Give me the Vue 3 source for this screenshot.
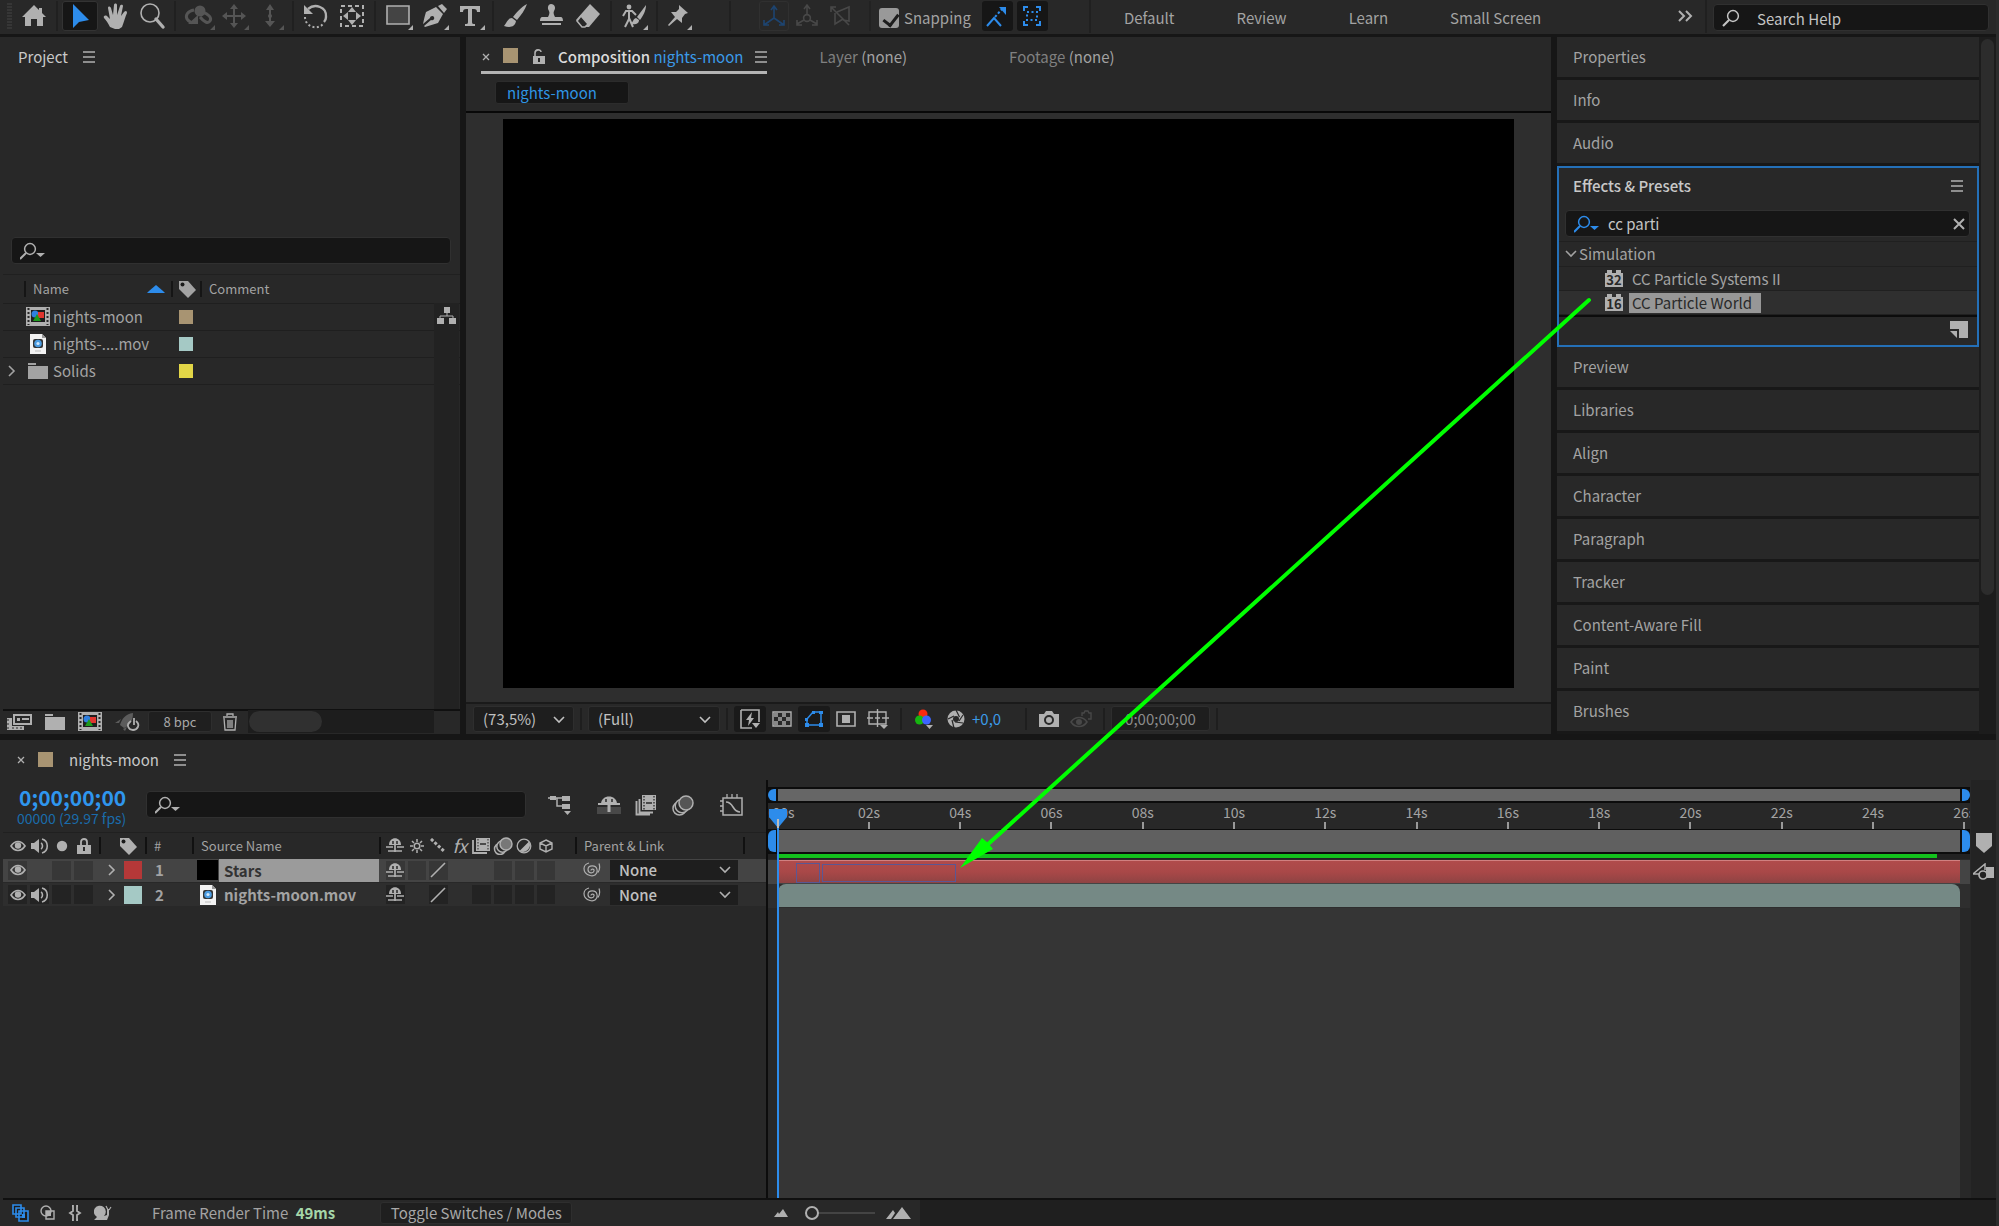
<script setup>
import { h, ref } from 'vue'

const art = {
  grip: [8, 30, '<path d="M1 3h5M1 6h5M1 9h5M1 12h5M1 15h5M1 18h5M1 21h5M1 24h5M1 27h5" stroke="#444" fill="none"/>'],
  home: [36, 30, '<path d="M18 4L6 16h3v9h6v-7h6v7h6v-9h3L26 12V7h-3v2z" fill="currentColor"/>'],
  arrow: [36, 30, '<path d="M11 3v24l6-6 10-2z" fill="currentColor"/>'],
  hand: [36, 30, '<path d="M12 26c-2-4-4-7-6-9-1-2 1-3 3-2l3 3-2-11c0-2 2-2 3 0l2 7 1-10c0-2 3-2 3 0v10l3-9c1-2 3-1 3 0l-2 10 3-4c2-2 3-1 3 1-2 4-3 9-5 14l-3 2h-4z" fill="currentColor"/>'],
  zoom: [36, 30, '<circle cx="16" cy="12" r="9" fill="none" stroke="currentColor" stroke-width="1.6"/><path d="M22 18l7 8" stroke="currentColor" stroke-width="3.4" stroke-linecap="round"/>'],
  orbit: [36, 30, '<g fill="none" stroke="currentColor" stroke-width="3"><path d="M14 9c-6 1-9 5-7 9 1 2 3 3 5 4M22 11c7 2 10 6 8 9-2 3-6 1-10-4"/></g><circle cx="20" cy="10" r="5.500" fill="currentColor"/><path d="M8 23h10v-9zM35 29v-5l-5 5z" fill="currentColor"/>'],
  pan: [36, 30, '<path d="M18 3l4 5h-3v6h6v-3l5 4-5 4v-3h-6v6h3l-4 5-4-5h3v-6h-6v3l-5-4 5-4v3h6V8h-3zM33 29v-5l-5 5z" fill="currentColor"/>'],
  dolly: [36, 30, '<path d="M18 3l4 6h-3v11h4l-5 6-5-6h4V9h-3z" fill="currentColor"/><circle cx="18" cy="15" r="2" fill="currentColor"/><path d="M32 29v-5l-5 5z" fill="currentColor"/>'],
  rotate: [36, 30, '<path d="M10 8c7-6 19-2 18 8 0 2-1 4-2 5" fill="none" stroke="currentColor" stroke-width="2.4"/><path d="M6 4v9h9z" fill="currentColor"/><path d="M7 16c0 10 13 14 19 6" fill="none" stroke="currentColor" stroke-width="2" stroke-dasharray="2 2.4"/>'],
  anchor: [36, 30, '<path d="M7 5h22v20H7z" fill="none" stroke="currentColor" stroke-width="2" stroke-dasharray="4 3"/><path d="M18 6l4 5h-8zM18 24l4-5h-8zM9 15l5-4v8zM27 15l-5-4v8z" fill="currentColor"/>'],
  rect: [36, 30, '<path d="M7 5h22v18H7z" fill="#444" stroke="currentColor" stroke-width="1.6"/><path d="M33 29v-5l-5 5z" fill="currentColor"/>'],
  pen: [36, 30, '<path d="M22 5l4-2 5 5-3 4zM20 6l7 7-5 9-13 4-1-1 7-6c2 1 4-1 3-3s-4-1-4 1l-7 6c1-5 2-9 3-12zM33 29v-5l-5 5z" fill="currentColor"/>'],
  type: [36, 30, '<path d="M8 5h20v6h-3c0-2-1-3-3-3h-2v13c0 2 1 2 3 2v2H13v-2c2 0 3 0 3-2V8h-2c-2 0-3 1-3 3H8zM33 29v-5l-5 5z" fill="currentColor"/>'],
  brush: [36, 30, '<path d="M29 3c-6 3-11 9-14 13l4 3c4-5 8-10 10-16zM14 17c-4 0-5 4-8 8 6 2 11 1 12-5z" fill="currentColor"/>'],
  stamp: [36, 30, '<path d="M17 3c4 0 5 4 3 7-1 2 0 4 1 6h6c2 0 2 4 2 4H6s0-4 2-4h6c1-2 2-4 1-6-2-3-1-7 2-7zM8 22h19v2H8z" fill="currentColor"/>'],
  eraser: [36, 30, '<path d="M20 3l10 10-11 13H12l-6-7z" fill="currentColor"/><path d="M11 15l7 8-3 3h-3l-5-6z" fill="#282828" stroke="currentColor" stroke-width="1.5"/>'],
  roto: [36, 30, '<circle cx="13" cy="6" r="2.4" fill="currentColor"/><path d="M7 15l3-5h6l4 4M13 10v8l-4 8M13 17l4 9" fill="none" stroke="currentColor" stroke-width="2"/><path d="M30 4l-9 12 3 3c3-4 6-9 6-15zM20 17c-3 1-3 4-5 6 4 1 8 0 8-4zM32 29v-5l-5 5z" fill="currentColor"/>'],
  pin: [36, 30, '<path d="M17 4l9 8-3 1-3 4v5l-5-4-8 7-1-1 7-8-4-5h5l3-3zM30 29v-5l-5 5z" fill="currentColor"/>'],
  axis1: [30, 28, '<path d="M15 5v11L5 23M15 16l10 7M12 8l3-4 3 4M5 18v5h5M25 18v5h-5" fill="none" stroke="currentColor" stroke-width="1.6"/>'],
  axis2: [30, 28, '<path d="M15 4v9M12 7l3-4 3 4M12 18l-7 4M18 18l7 4M5 18v5h5M25 18v5h-5" fill="none" stroke="currentColor" stroke-width="1.6"/><circle cx="15" cy="16" r="3.4" fill="none" stroke="currentColor" stroke-width="1.6"/>'],
  axis3: [30, 28, '<path d="M6 5l18 18M6 10V5h5M12 10l12-5v14l-6-1M10 11v11l8-5" fill="none" stroke="currentColor" stroke-width="1.6"/>'],
  snap: [30, 28, '<path d="M5 24l7-8 7 8" fill="none" stroke="currentColor" stroke-width="2"/><path d="M13 15l7-8" stroke="currentColor" stroke-width="2" stroke-dasharray="2.5 2"/><path d="M17 5h7v8z" fill="currentColor"/>'],
  bounds: [30, 28, '<path d="M7 9V5h4M19 5h4v4M23 19v4h-4M11 23H7v-4" fill="none" stroke="currentColor" stroke-width="2"/><path d="M10 10h10v8H10z" fill="none" stroke="currentColor" stroke-width="2" stroke-dasharray="2 2.5"/>'],
  more: [16, 12, '<path d="M2 1l5 5-5 5M9 1l5 5-5 5" fill="none" stroke="currentColor" stroke-width="2"/>'],
  lens: [18, 18, '<circle cx="11" cy="7" r="5.4" fill="none" stroke="currentColor" stroke-width="1.5"/><path d="M7 11l-6 6" stroke="currentColor" stroke-width="2.2"/>'],
  lensdrop: [26, 18, '<circle cx="10" cy="7" r="5.4" fill="none" stroke="currentColor" stroke-width="1.5"/><path d="M6 11l-6 6" stroke="currentColor" stroke-width="2"/><path d="M16 11h9l-4.500 4z" fill="currentColor"/>'],
  menu: [12, 12, '<path d="M0 1h12M0 6h12M0 11h12" stroke="currentColor" stroke-width="1.500"/>'],
  close: [10, 10, '<path d="M2 2l6 6M8 2l-6 6" stroke="currentColor" stroke-width="1.300"/>'],
  clear: [14, 14, '<path d="M2 2l10 10M12 2L2 12" stroke="currentColor" stroke-width="2"/>'],
  unlock: [14, 16, '<path d="M3 7V4c0-4 6-4 6-1" fill="none" stroke="currentColor" stroke-width="1.6"/><path d="M1 7h12v8H1z" fill="currentColor"/><path d="M7 9v4" stroke="#282828" stroke-width="2"/>'],
  lock: [14, 16, '<path d="M4 8V4c0-4 6-4 6 0v4" fill="none" stroke="currentColor" stroke-width="1.8"/><path d="M0 7h14v9H0z" fill="currentColor"/><path d="M7 9v4" stroke="#282828" stroke-width="2"/>'],
  sort: [18, 8, '<path d="M0 8l2-2 7-6 7 6 2 2z" fill="#2d8ceb"/>'],
  tag: [18, 18, '<path d="M1 1h9l8 9-8 8-9-9z" fill="currentColor"/><circle cx="4.500" cy="4.500" r="2" fill="#1a1a1a"/>'],
  comp: [24, 19, '<path d="M0 0h24v19H0z" fill="#b0b0b0"/><path d="M5 3h14v12H5z" fill="#1d1d1d"/><path d="M2.500 1v17M21.500 1v17" stroke="#282828" stroke-width="2" stroke-dasharray="2 2"/><circle cx="9" cy="7" r="3.500" fill="#2f7fe0"/><path d="M12 5h6v6h-6z" fill="#e0352f"/><path d="M11 7l4 7H7z" fill="#1d9a1d"/>'],
  mov: [16, 20, '<path d="M0 0h12l4 4v16H0z" fill="#f2f2f2"/><path d="M12 0v4h4z" fill="#999"/><rect x="3" y="5" width="10" height="9" rx="2" fill="#333"/><circle cx="8" cy="9.500" r="3.800" fill="#4a9be0"/><circle cx="8" cy="9.500" r="1.600" fill="#cfe6fa"/><path d="M5 17h6" stroke="#bbb"/>'],
  folder: [20, 16, '<path d="M0 0h8v2H0zM0 3h20v13H0z" fill="currentColor"/>'],
  chev: [8, 12, '<path d="M1 1l5 5-5 5" fill="none" stroke="currentColor" stroke-width="1.600"/>'],
  down: [12, 8, '<path d="M1 1l5 5 5-5" fill="none" stroke="currentColor" stroke-width="1.600"/>'],
  tree: [20, 18, '<path d="M7 0h6v6H7zM0 11h7v6H0zM12 11h7v6h-7z" fill="currentColor"/><path d="M10 6v3M3 11V9h13v2" fill="none" stroke="currentColor"/>'],
  interpret: [26, 18, '<path d="M8 2h17v9H8z" fill="none" stroke="currentColor" stroke-width="2"/><path d="M11 5h3v3h-3z" fill="currentColor"/><path d="M16 6h7" stroke="currentColor" stroke-width="2"/><path d="M1 5h5v8h12v4H1z" fill="currentColor"/><path d="M2 6v11M6 15h11" stroke="#282828" stroke-dasharray="2 2" fill="none"/>'],
  rocket: [26, 18, '<path d="M18 0C10 1 7 6 5 12l4 3c5-2 9-6 9-15zM6 6l-6 4h4zM8 16l4-2-2 4z" fill="#5c5c5c"/><path d="M16 8c-6 4-2 9 2 9s8-5 3-9M19 5v7" fill="none" stroke="currentColor" stroke-width="1.800"/>'],
  trash: [16, 18, '<path d="M1 4h14M5 3V1h6v2M2 5l1 12h10l1-12M6 7v8M8 7v8M10 7v8" fill="none" stroke="currentColor" stroke-width="1.300"/>'],
  fast: [20, 20, '<path d="M1 1h18v12M12 19H1V1" fill="none" stroke="currentColor" stroke-width="1.600"/><path d="M12 3l-6 8h3l-1 6 6-8h-3z" fill="currentColor"/><path d="M12 14h8l-4 5z" fill="currentColor"/>'],
  checker: [20, 16, '<path d="M1 1h18v14H1z" fill="none" stroke="currentColor" stroke-width="1.400"/><path d="M2 2h4v4H2zM10 2h4v4h-4zM6 6h4v4H6zM14 6h4v4h-4zM2 10h4v4H2zM10 10h4v4h-4z" fill="currentColor" opacity=".7"/>'],
  mask: [20, 18, '<path d="M3 15V9l6-7h8v13z" fill="none" stroke="currentColor" stroke-width="1.500"/><path d="M1 13h4v4H1zM15 13h4v4h-4zM15 1h4v3h-4zM8 1h3v3H8zM1 8h3v3H1z" fill="currentColor"/>'],
  region: [20, 16, '<path d="M1 1h18v14H1z" fill="none" stroke="currentColor" stroke-width="1.600"/><path d="M6 4h8v8H6z" fill="currentColor"/>'],
  guides: [22, 20, '<path d="M2 3h17v12H2zM10.500 0v18M0 9h6M8 9h5M15 9h7" fill="none" stroke="currentColor" stroke-width="1.400"/><path d="M13 16h8l-4 4z" fill="currentColor"/>'],
  rgb: [18, 20, '<circle cx="8" cy="5" r="4.500" fill="#fa2a10"/><circle cx="4.500" cy="11" r="4.500" fill="#16b510"/><circle cx="11.500" cy="11" r="4.500" fill="#3c64ff"/><path d="M11 16h7l-3.500 4z" fill="currentColor"/>'],
  aperture: [18, 18, '<circle cx="9" cy="9" r="8.500" fill="currentColor"/><circle cx="9" cy="9" r="3" fill="#282828"/><path d="M9 0l3.500 7M16 5l-4 6M16 13l-8-1M7 18l-2-8M1 9l6-3" stroke="#282828" stroke-width="1.200"/>'],
  camera: [20, 18, '<path d="M0 4h5l2-3h6l2 3h5v13H0z" fill="currentColor"/><circle cx="10" cy="10" r="4" fill="none" stroke="#282828" stroke-width="2"/>'],
  ghost: [22, 20, '<path d="M1 13c4-6 12-6 16 0-4 6-12 6-16 0z" fill="none" stroke="currentColor" stroke-width="1.600"/><circle cx="9" cy="13" r="3" fill="currentColor"/><path d="M12 7V4h2l1-2h3l1 2h2v6h-3" fill="none" stroke="currentColor" stroke-width="1.400"/>'],
  b32: [18, 17, '<path d="M0 3h2V0h5v3h4V0h5v3h2v14H0z" fill="currentColor"/>'],
  newbin: [18, 17, '<path d="M0 0h18v17H9V8H0z" fill="currentColor"/><path d="M0 10h7v7z" fill="currentColor"/>'],
  flow: [24, 20, '<path d="M0 3h14M9 3v8h6" stroke="currentColor" stroke-width="1.500" fill="none"/><path d="M2 1h6v4H2zM14 1h8v5h-8zM14 9h8v5h-8zM16 16h7l-3.500 4z" fill="currentColor"/>'],
  shy: [18, 15, '<path d="M3 7c0-9 12-9 12 0z" fill="currentColor"/><path d="M0 9h7M11 9h7M2 13h14M9 6v8" stroke="currentColor" stroke-width="1.700"/><path d="M7 3v3M11 3v3" stroke="#282828" stroke-width="1.500"/>'],
  shybig: [24, 18, '<path d="M0 11h24v7H0z" fill="#484848"/><path d="M4 8c0-10 16-10 16 0z" fill="currentColor"/><path d="M1 8h22" stroke="currentColor" stroke-width="2"/><path d="M12 6v10" stroke="currentColor" stroke-width="3"/><path d="M9 3v3M15 3v3" stroke="#282828" stroke-width="1.500"/>'],
  frames: [18, 16, '<path d="M4 0h14v13H4z" fill="currentColor"/><path d="M6 1v11M16 1v11" stroke="#282828" stroke-dasharray="1.500 1.500"/><path d="M8 6h6" stroke="#282828" stroke-width="1.500"/><path d="M1 2v13h14" fill="none" stroke="currentColor" stroke-width="1.800"/>'],
  framesbig: [22, 21, '<path d="M7 0h14v15H7z" fill="currentColor"/><path d="M9 1v14M19 1v14" stroke="#282828" stroke-width="1.300" stroke-dasharray="1.500 1.500"/><path d="M11 8h6" stroke="#282828" stroke-width="1.500"/><path d="M4.500 4v13.500H18M1.500 6v13.500H15" fill="none" stroke="currentColor" stroke-width="1.900"/>'],
  blur: [20, 18, '<g stroke="currentColor" stroke-width="1.500"><circle cx="7" cy="12" r="5.500" fill="#282828"/><circle cx="9.500" cy="9.500" r="5.700" fill="#282828"/><circle cx="13" cy="7" r="6" fill="#777"/></g>'],
  blurbig: [22, 21, '<g stroke="currentColor" stroke-width="1.500" fill="#282828"><circle cx="7.500" cy="13.500" r="6.500"/><circle cx="10" cy="11" r="6.800"/><circle cx="14" cy="8" r="7" fill="#555"/></g>'],
  graph: [24, 22, '<path d="M3 4h19v17H3z" fill="none" stroke="currentColor" stroke-width="1.500"/><path d="M7 0v4M12 0v4M17 0v4M0 7h3M0 12h3M0 17h3" stroke="currentColor" stroke-width="1.300"/><path d="M6 8c8 0 6 10 14 10" fill="none" stroke="currentColor" stroke-width="1.600"/>'],
  eye: [16, 12, '<path d="M1 6c4-6 10-6 14 0-4 6-10 6-14 0z" fill="none" stroke="currentColor" stroke-width="1.700"/><circle cx="8" cy="5.500" r="3.200" fill="currentColor"/>'],
  sound: [18, 16, '<path d="M0 5h3l5-4v14l-5-4H0z" fill="currentColor"/><path d="M10 5c2 1 2 5 0 6M11 1c7 2 7 12 0 14" fill="none" stroke="currentColor" stroke-width="1.600"/>'],
  dot: [12, 12, '<circle cx="6" cy="6" r="5.200" fill="currentColor"/>'],
  sun: [16, 16, '<circle cx="8" cy="8" r="2.800" fill="none" stroke="currentColor" stroke-width="1.500"/><path d="M8 1v3M8 12v3M1 8h3M12 8h3M3 3l2 2M11 11l2 2M13 3l-2 2M5 11l-2 2" stroke="currentColor" stroke-width="1.500"/>'],
  dashes: [16, 16, '<path d="M1 1l14 13" stroke="currentColor" stroke-width="3" stroke-dasharray="3 1.800"/>'],
  slash: [16, 16, '<path d="M1 15L15 1" stroke="currentColor" stroke-width="1.600"/>'],
  adj: [16, 16, '<circle cx="8" cy="8" r="6.800" fill="none" stroke="currentColor" stroke-width="1.300"/><path d="M13 3.500A7 7 0 0 1 3.500 13z" fill="currentColor"/>'],
  cube: [14, 14, '<path d="M7 1l6 3v6l-6 3-6-3V4zM1 4l6 3 6-3M7 7v6" fill="none" stroke="currentColor" stroke-width="1.400"/>'],
  whip: [18, 16, '<path d="M8 8.500c0-2 3.500-2 3 .5s-6 3-6-1.500 8-5 9 0-3 7-7 6-6-4-6-7 3-5 5-5.500M16 1.500c1 3 1 6-1 9" fill="none" stroke="currentColor" stroke-width="1.200"/>'],
  marker: [16, 20, '<path d="M0 0h16v13l-8 7-8-7z" fill="currentColor"/>'],
  bin: [22, 18, '<path d="M13 4h8v11h-8z" fill="currentColor"/><path d="M0 11l12-10v6M0 11h8" fill="none" stroke="currentColor" stroke-width="1.500"/><circle cx="10" cy="12" r="4" fill="#222" stroke="currentColor" stroke-width="1.700"/>'],
  head: [18, 20, '<path d="M0 1h18v8L9 20 0 9z" fill="#2d8ceb"/><path d="M9 11v9" stroke="#bdbdbd" stroke-width="2"/>'],
  stack: [17, 18, '<g fill="#1d1d1d" stroke="#2d8ceb" stroke-width="1.600"><path d="M1 1h8v9H1zM4 4h8v9H4zM7 7h9v10H7z"/></g><path d="M10 10h3v4h-3z" fill="#2d8ceb"/>'],
  circlesq: [16, 16, '<circle cx="6" cy="6" r="5" fill="none" stroke="currentColor" stroke-width="1.400"/><path d="M6 6h8v8H6z" fill="none" stroke="currentColor" stroke-width="1.400"/><path d="M6 6h5v5H6z" fill="currentColor"/>'],
  braces: [16, 16, '<path d="M5 1h1v5l-3 2 3 2v5H5M11 1h-1v5l3 2-3 2v5h1" fill="none" stroke="currentColor" stroke-width="1.800"/>'],
  snail: [18, 16, '<path d="M0 15l3-3a6 6 0 1 1 7-1l3-1V4h2v6l-2 5z" fill="currentColor"/><path d="M12 1l2 4M17 2l-2 3" stroke="currentColor" stroke-width="1.200"/>'],
  mts: [14, 8, '<path d="M0 8l4-5 1 2 4-5 5 8z" fill="currentColor"/>'],
  mtl: [26, 12, '<path d="M0 12l7-9 2 3-4 6zM7 12l9-12 9 12z" fill="currentColor"/>']
}
const Icon = ({ name }) => {
  const [w, hh, inner] = art[name]
  return h('svg', { width: w, height: hh, viewBox: `0 0 ${w} ${hh}`, 'aria-hidden': 'true', innerHTML: inner, style: { flex: 'none', display: 'block' } })
}
Icon.props = ['name']

const tools = [
  'home', '', 'arrow', 'hand', 'zoom', '', 'orbit', 'pan', 'dolly', '', 'rotate', 'anchor', '',
  'rect', 'pen', 'type', '', 'brush', 'stamp', 'eraser', '', 'roto', '', 'pin'
]
const dimTools = ['orbit', 'pan', 'dolly']
const snapping = ref(true)
const effectQuery = ref('cc parti')
const topPanels = ['Properties', 'Info', 'Audio']
const lowPanels = ['Preview', 'Libraries', 'Align', 'Character', 'Paragraph', 'Tracker', 'Content-Aware Fill', 'Paint', 'Brushes']
const items = [
  { name: 'nights-moon', icon: 'comp', color: '#a89472' },
  { name: 'nights-....mov', icon: 'mov', color: '#a5c9c5' },
  { name: 'Solids', icon: 'folder', color: '#e2d647', open: true }
]
const layers = [
  { n: 1, name: 'Stars', color: '#b53838', active: true, audio: false, sw: ['shy', 'box', 'slash', '', '', 'box', 'box', 'box'] },
  { n: 2, name: 'nights-moon.mov', color: '#a5c9c5', active: false, audio: true, sw: ['shy', '', 'slash', '', 'box', 'box', 'box', 'box'] }
]
const ticks = ['0:00s', '02s', '04s', '06s', '08s', '10s', '12s', '14s', '16s', '18s', '20s', '22s', '24s', '26s']
</script>

<template>
  <div class="app">
    <header class="toolbar">
      <Icon name="grip" class="grip" />
      <div class="tools">
        <template v-for="(t, i) in tools" :key="i">
          <span v-if="!t" class="tsep"></span>
          <button v-else class="tool" :class="{ on: t === 'arrow', dim: dimTools.includes(t) }" :aria-label="t"><Icon :name="t" /></button>
        </template>
      </div>
      <span class="tsep wide"></span>
      <div class="axes">
        <button class="axis first" aria-label="Local axis"><Icon name="axis1" /></button>
        <button class="axis" aria-label="World axis"><Icon name="axis2" /></button>
        <button class="axis" aria-label="View axis"><Icon name="axis3" /></button>
      </div>
      <label class="snapping"><input v-model="snapping" type="checkbox" /><span>Snapping</span></label>
      <button class="snapbtn" aria-label="Snap edges"><Icon name="snap" /></button>
      <button class="snapbtn" aria-label="Snap bounds"><Icon name="bounds" /></button>
      <nav class="spaces">
        <a href="#">Default</a><a href="#">Review</a><a href="#">Learn</a><a href="#">Small Screen</a>
      </nav>
      <button class="morebtn" aria-label="More workspaces"><Icon name="more" /></button>
      <div class="help">
        <label class="field"><Icon name="lens" /><input type="text" placeholder="Search Help" aria-label="Search Help" /></label>
      </div>
    </header>

    <main class="upper">
      <section class="panel project">
        <h2 class="title">Project <button class="menu" aria-label="Project menu"><Icon name="menu" /></button></h2>
        <label class="field psearch"><Icon name="lensdrop" /><input type="text" aria-label="Search project" /></label>
        <div class="plist">
          <table class="ptable">
            <colgroup><col class="c1" /><col class="c2" /><col class="c3" /><col /></colgroup>
            <thead>
              <tr>
                <th></th>
                <th><div class="hname"><span>Name</span><Icon name="sort" /></div></th>
                <th><div class="htag"><Icon name="tag" /></div></th>
                <th><div class="hcom">Comment</div></th>
              </tr>
            </thead>
            <tbody>
              <tr v-for="it in items" :key="it.name">
                <td><div class="tog"><Icon v-if="it.open" name="chev" /></div></td>
                <td><div class="pname"><span class="pic"><Icon :name="it.icon" /></span>{{ it.name }}</div></td>
                <td><i class="sw" :style="{ background: it.color }"></i></td>
                <td></td>
              </tr>
            </tbody>
          </table>
          <div class="side"><Icon name="tree" /></div>
        </div>
        <footer class="pfoot">
          <button aria-label="Interpret footage"><Icon name="interpret" /></button>
          <button aria-label="New folder"><Icon name="folder" /></button>
          <button aria-label="New composition"><Icon name="comp" /></button>
          <button aria-label="Project settings"><Icon name="rocket" /></button>
          <button class="bpc">8 bpc</button>
          <button aria-label="Delete"><Icon name="trash" /></button>
          <div class="hscroll"><i></i></div>
        </footer>
      </section>

      <section class="panel comp">
        <div class="tabs">
          <div class="tab">
            <button aria-label="Close tab"><Icon name="close" /></button>
            <i class="chip"></i>
            <button aria-label="Lock"><Icon name="unlock" /></button>
            <span class="tabname">Composition <b>nights-moon</b></span>
            <button aria-label="Tab menu"><Icon name="menu" /></button>
          </div>
          <span class="off layer">Layer <em>(none)</em></span>
          <span class="off foot">Footage <em>(none)</em></span>
        </div>
        <div class="crumb"><button>nights-moon</button></div>
        <div class="viewer"><div class="canvas"></div></div>
        <footer class="cfoot">
          <span class="drop zoomsel"><select aria-label="Magnification"><option>(73,5%)</option></select><Icon name="down" /></span>
          <i class="vs"></i>
          <span class="drop ressel"><select aria-label="Resolution"><option>(Full)</option></select><Icon name="down" /></span>
          <i class="vs"></i>
          <button class="vb dark" aria-label="Fast previews"><Icon name="fast" /></button>
          <button class="vb" aria-label="Transparency grid"><Icon name="checker" /></button>
          <button class="vb dark blue" aria-label="Mask visibility"><Icon name="mask" /></button>
          <button class="vb" aria-label="Region of interest"><Icon name="region" /></button>
          <button class="vb" aria-label="Guides"><Icon name="guides" /></button>
          <i class="vs"></i>
          <button class="vb" aria-label="Channels"><Icon name="rgb" /></button>
          <button class="vb" aria-label="Exposure"><Icon name="aperture" /></button>
          <span class="exposure">+0,0</span>
          <i class="vs"></i>
          <button class="vb" aria-label="Snapshot"><Icon name="camera" /></button>
          <button class="vb dim" aria-label="Show snapshot"><Icon name="ghost" /></button>
          <i class="vs"></i>
          <button class="tc">0;00;00;00</button>
          <i class="vs"></i>
        </footer>
      </section>

      <aside class="right">
        <div class="stack">
          <h2 v-for="p in topPanels" :key="p" class="acc">{{ p }}</h2>
          <section class="effects">
            <h2 class="etitle">Effects &amp; Presets <button aria-label="Effects menu"><Icon name="menu" /></button></h2>
            <div class="field esearch">
              <Icon name="lensdrop" class="lensblue" />
              <input v-model="effectQuery" type="text" aria-label="Search effects" />
              <button aria-label="Clear"><Icon name="clear" /></button>
            </div>
            <ul class="elist">
              <li class="group"><Icon name="down" />Simulation</li>
              <li><span class="brick"><Icon name="b32" /><b>32</b></span><span class="en">CC Particle Systems II</span></li>
              <li class="hot"><span class="brick"><Icon name="b32" /><b>16</b></span><span class="en picked">CC Particle World</span></li>
            </ul>
            <div class="efoot"><button aria-label="New bin"><Icon name="newbin" /></button></div>
          </section>
          <h2 v-for="p in lowPanels" :key="p" class="acc">{{ p }}</h2>
        </div>
        <div class="vscroll"><i></i></div>
      </aside>
    </main>

    <section class="timeline">
      <div class="ttab">
        <button aria-label="Close timeline"><Icon name="close" /></button>
        <i class="chip"></i>
        <span>nights-moon</span>
        <button aria-label="Timeline menu"><Icon name="menu" /></button>
      </div>
      <div class="tbody">
        <div class="left">
          <div class="ctl">
            <div class="clock"><strong>0;00;00;00</strong><small>00000 (29.97 fps)</small></div>
            <label class="field lsearch"><Icon name="lensdrop" /><input type="text" aria-label="Search layers" /></label>
            <div class="cbtns">
              <button class="apart" aria-label="Mini flowchart"><Icon name="flow" /></button>
              <button aria-label="Hide shy layers"><Icon name="shybig" /></button>
              <button aria-label="Frame blending"><Icon name="framesbig" /></button>
              <button class="apart" aria-label="Motion blur"><Icon name="blurbig" /></button>
              <button aria-label="Graph editor"><Icon name="graph" /></button>
            </div>
          </div>
          <table class="ltable">
            <colgroup><col class="l1" /><col class="l2" /><col class="l3" /><col class="l4" /><col class="l5" /><col class="l6" /><col /></colgroup>
            <thead>
              <tr>
                <th><div class="av"><span><Icon name="eye" /></span><span><Icon name="sound" /></span><span><Icon name="dot" /></span><span><Icon name="lock" /></span></div></th>
                <th><div class="lab"><Icon name="tag" /></div></th>
                <th><div class="num">#</div></th>
                <th><div class="src">Source Name</div></th>
                <th>
                  <div class="sws">
                    <span><Icon name="shy" /></span><span><Icon name="sun" /></span><span><Icon name="dashes" /></span><span class="fx">fx</span>
                    <span><Icon name="frames" /></span><span><Icon name="blur" /></span><span><Icon name="adj" /></span><span><Icon name="cube" /></span>
                  </div>
                </th>
                <th><div class="par">Parent &amp; Link</div></th>
                <th><div></div></th>
              </tr>
            </thead>
            <tbody>
              <tr v-for="l in layers" :key="l.n" :class="{ active: l.active }">
                <td><div class="av"><span class="bx"><Icon name="eye" /></span><span :class="{ bx: l.audio }"><Icon v-if="l.audio" name="sound" /></span><span class="bx"></span><span class="bx"></span></div></td>
                <td><div class="lab2"><Icon name="chev" /><i :style="{ background: l.color }"></i></div></td>
                <td><div class="num big">{{ l.n }}</div></td>
                <td><div class="lname"><span class="lpic"><Icon v-if="!l.active" name="mov" /><i v-else></i></span><span class="lt">{{ l.name }}</span></div></td>
                <td><div class="sws"><span v-for="(s, i) in l.sw" :key="i" :class="{ bx: s }"><Icon v-if="s && s !== 'box'" :name="s" /></span></div></td>
                <td>
                  <div class="pl"><Icon name="whip" /><span class="drop psel"><select :aria-label="'Parent of ' + l.name"><option>None</option></select><Icon name="down" /></span></div>
                </td>
                <td></td>
              </tr>
            </tbody>
          </table>
        </div>

        <div class="graph">
          <div class="nav"><i class="capl"></i><i class="bar"></i><i class="capr"></i></div>
          <div class="ruler"><span v-for="t in ticks" :key="t">{{ t }}</span></div>
          <div class="work"><i class="capl"></i><i class="bar"></i><i class="capr"></i></div>
          <div class="cache"><i></i></div>
          <div class="lane hot"><div class="clip red"><i class="k1"></i><i class="k2"></i></div></div>
          <div class="lane"><div class="clip teal"></div></div>
          <div class="void"><i></i></div>
          <div class="play"><Icon name="head" /><i></i></div>
        </div>
        <div class="gutter"><Icon name="marker" /><Icon name="bin" /></div>
      </div>
      <footer class="tfoot">
        <div class="fmain">
          <button class="stackbtn" aria-label="Layer switches"><Icon name="stack" /></button>
          <button aria-label="Transfer controls"><Icon name="circlesq" /></button>
          <button aria-label="In and out"><Icon name="braces" /></button>
          <button aria-label="Render time"><Icon name="snail" /></button>
          <span class="frt">Frame Render Time <b>49ms</b></span>
          <button class="toggle">Toggle Switches / Modes</button>
          <Icon name="mts" class="mts" />
          <input class="zoomer" type="range" min="0" max="100" value="0" aria-label="Timeline zoom" />
          <Icon name="mtl" />
        </div>
      </footer>
    </section>

    <svg class="pointer" viewBox="0 0 1999 1226" preserveAspectRatio="none" aria-hidden="true">
      <path d="M1589 300L986 846" stroke="#0f0" stroke-width="4" stroke-linecap="round" />
      <path d="M960 868l22-30 5 4 6 7z" fill="#0f0" />
    </svg>
  </div>
</template>

<style>
body { margin: 0; background: #161616; }
</style>

<style scoped>
.app {
  position: relative; display: flex; flex-direction: column; height: 100vh; box-sizing: border-box;
  background: #161616; color: #a3a3a3; overflow: hidden;
  font-family: "Noto Sans CJK SC", "Noto Sans", sans-serif; font-size: 15px; line-height: 20px;
  border-right: 3px solid #2c2c2c;
}
.app * { box-sizing: border-box; }
button, input, select { font: inherit; color: inherit; background: none; border: 0; padding: 0; margin: 0; outline: 0; }
button { display: flex; align-items: center; justify-content: center; color: #b0b0b0; }
h2 { margin: 0; font-size: 15px; font-weight: 400; }
a { color: inherit; text-decoration: none; }
table { border-collapse: collapse; table-layout: fixed; width: 100%; }
th, td { padding: 0; font-weight: 400; text-align: left; }
select { appearance: none; width: 100%; height: 100%; }
i, em { font-style: normal; }

.field { display: flex; align-items: center; height: 27px; background: #161616; border: 1px solid #303030; border-radius: 4px; color: #b0b0b0; }
.field input { flex: 1; min-width: 0; height: 100%; }
.chip { width: 15px; height: 15px; background: #a89472; }

/* toolbar */
.toolbar { flex: none; display: flex; align-items: center; height: 34px; margin-bottom: 3px; padding-bottom: 2px; background: #282828; }
.grip { margin-left: 6px; }
.tools { display: flex; align-items: center; margin-left: 2px; }
.tool { width: 36px; height: 30px; }
.tool.on { color: #2d8ceb; background: #161616; border-radius: 3px; box-shadow: inset 0 0 0 1px #333; }
.tool.dim { color: #555; }
.tsep { width: 10px; height: 30px; background: linear-gradient(#202020, #202020) center / 2px 100% no-repeat; }
.tsep.wide { margin-left: 27px; }
.axes { display: flex; margin-left: 24px; padding-right: 14px; gap: 3px; border-right: 2px solid #222; }
.axis { width: 30px; height: 30px; color: #484848; }
.axis.first { color: #1d4470; border: 1px solid #303030; border-radius: 3px; }
.snapping { display: flex; align-items: center; gap: 5px; margin-left: 8px; padding-top: 4px; margin-right: 11px; }
.snapping input { appearance: none; position: relative; width: 20px; height: 20px; border-radius: 3px; background: #999; }
.snapping input:checked::after { content: ""; position: absolute; left: 7px; top: 3px; width: 7px; height: 12px; border: solid #1d1d1d; border-width: 0 3px 3px 0; transform: rotate(38deg); }
.snapbtn { width: 31px; height: 30px; margin-right: 4px; color: #2d8ceb; background: #161616; border-radius: 3px; }
.spaces { display: flex; gap: 62px; margin-left: 37px; padding: 4px 0 0 33px; border-left: 2px solid #202020; height: 34px; align-items: center; }
.morebtn { margin-left: auto; width: 16px; }
.help { margin-left: 12px; padding: 5px 7px 0 6px; border-left: 2px solid #202020; height: 34px; }
.help .field { width: 276px; padding-left: 8px; gap: 17px; height: 27px; color: #c4c4c4; }
.help input { padding-top: 2px; }
.help input::placeholder { color: #c4c4c4; opacity: 1; }

/* upper area */
.upper { flex: 697 1 0; min-height: 0; display: flex; gap: 6px; }
.panel { background: #282828; display: flex; flex-direction: column; min-width: 0; }
.project { width: 460px; flex: none; padding-left: 3px; }
.title { display: flex; align-items: center; gap: 15px; padding: 10px 0 0 15px; height: 30px; color: #c8c8c8; }
.psearch { margin: 170px 9px 10px 8px; padding-left: 8px; gap: 8px; }
.plist { flex: 1; display: flex; min-height: 0; position: relative; border-top: 1px solid #202020; }
.ptable { align-self: flex-start; }
.c1 { width: 21px; } .c2 { width: 147px; } .c3 { width: 29px; }
.ptable th { height: 28px; font-size: 13px; }
.ptable tr { border-bottom: 1px solid #1f1f1f; }
.ptable td { height: 27px; }
.hname, .htag, .hcom { display: flex; align-items: center; height: 16px; border-left: 2px solid #151515; }
.hname { justify-content: space-between; padding: 0 6px 0 7px; }
.htag { padding-left: 5px; } .hcom { padding-left: 7px; }
.tog { padding-left: 5px; }
.pname { display: flex; align-items: center; white-space: nowrap; }
.pic { width: 29px; display: flex; justify-content: center; padding-right: 1px; }
.sw { display: block; width: 14px; height: 14px; margin-left: 8px; }
.side { position: absolute; right: 1px; top: 28px; bottom: 0; width: 25px; padding: 4px 3px; background: #222; color: #b0b0b0; }
.pfoot { flex: none; display: flex; align-items: center; height: 25px; border-top: 2px solid #101010; padding: 0 0 2px 3px; gap: 13px; }
.bpc { width: 64px; height: 21px; margin: 0 -3px 0 -6px; background: #1f1f1f; border: 1px solid #2e2e2e; border-radius: 3px; color: #a8a8a8; font-size: 13px; }
.hscroll { flex: 1; height: 23px; margin: 0 26px 0 -3px; background: #1d1d1d; }
.hscroll i { display: block; width: 73px; height: 21px; border-radius: 11px; background: #303030; margin: 1px; }

/* composition */
.comp { flex: 1; }
.tabs { display: flex; height: 37px; padding: 4px 0 0 15px; }
.tab { display: flex; align-items: center; height: 33px; border-bottom: 3px solid #b4b4b4; white-space: nowrap; color: #dcdcdc; padding-top: 2px; }
.tab .chip { margin: 0 14px 4px 12px; }
.tabname { margin: 0 12px 0 12px; font-weight: 500; }
.tabname b { font-weight: 400; color: #3b9be8; }
.off { padding-top: 6px; color: #808080; }
.off em { color: #a3a3a3; }
.layer { margin-left: 52px; } .foot { margin-left: 102px; }
.crumb { height: 39px; padding: 7px 0 0 29px; border-bottom: 2px solid #080808; }
.crumb button { width: 134px; height: 23px; padding-left: 11px; justify-content: flex-start; background: #161616; border: 1px solid #2c2c2c; border-radius: 3px; color: #2f94e4; }
.viewer { flex: 1; min-height: 0; display: flex; padding: 6px 37px 14px; background: #2e2e2e; }
.canvas { flex: 1; background: #000; }
.cfoot { flex: none; display: flex; align-items: center; height: 32px; border-top: 2px solid #1a1a1a; padding: 0 0 1px 7px; }
.drop { position: relative; display: block; height: 26px; background: #1e1e1e; border: 1px solid #2e2e2e; border-radius: 3px; color: #c0c0c0; }
.drop svg { position: absolute; right: 8px; top: 9px; pointer-events: none; }
.drop select { padding-left: 9px; }
.zoomsel { width: 101px; } .ressel { width: 132px; }
.vs { width: 2px; height: 22px; background: #1e1e1e; margin: 0 6px; }
.vb { width: 32px; height: 26px; }
.vb.dark { background: #1a1a1a; border-radius: 3px; }
.vb.blue { color: #2d8ceb; }
.vb.dim { color: #484848; }
.exposure { color: #3b9be8; width: 47px; }
.tc { width: 99px; height: 25px; background: #1e1e1e; border: 1px solid #2e2e2e; border-radius: 3px; color: #8c8c8c; }

/* right column */
.right { flex: none; width: 439px; display: flex; }
.stack { flex: 1; display: flex; flex-direction: column; }
.acc { height: 43px; padding: 10px 0 0 16px; background: #282828; border-bottom: 3px solid #181818; }
.effects { height: 181px; background: #282828; border: 2px solid #2470b8; display: flex; flex-direction: column; }
.etitle { display: flex; justify-content: space-between; padding: 8px 14px 0 14px; height: 42px; color: #c8c8c8; font-weight: 500; }
.etitle button { height: 20px; }
.esearch { flex: none; margin: 0 7px 4px 6px; padding: 0 3px 0 8px; gap: 8px; color: #c4c4c4; }
.lensblue { color: #2d8ceb; }
.elist { list-style: none; margin: 0; padding: 0; border-top: 1px solid #202020; }
.elist li { display: flex; align-items: center; height: 24px; border-bottom: 1px solid #202020; padding-left: 46px; }
.elist li.group { padding-left: 6px; gap: 2px; height: 25px; }
.elist li.hot { background: #2f2f2f; }
.brick { position: relative; color: #b0b0b0; margin-right: 6px; }
.brick b { position: absolute; inset: 2px 0 0; text-align: center; font-size: 13px; line-height: 15px; color: #282828; }
.en { padding: 0 3px; }
.picked { background: #979797; color: #2a2a2a; padding-right: 9px; }
.efoot { flex: 1; display: flex; justify-content: flex-end; align-items: flex-start; padding: 4px 9px 0 0; border-top: 2px solid #0c0c0c; }
.vscroll { width: 17px; background: #1c1c1c; padding: 2px 2px 0; }
.vscroll i { display: block; height: 80%; background: #2c2c2c; border-radius: 7px; }

/* timeline */
.timeline { flex: 486 1 0; min-height: 0; margin-top: 6px; background: #282828; display: flex; flex-direction: column; padding-left: 3px; }
.ttab { flex: none; display: flex; align-items: center; height: 40px; padding-left: 13px; color: #c8c8c8; }
.ttab .chip { margin: 0 16px 2px 12px; }
.ttab span { margin-right: 15px; }
.tbody { flex: 1; display: flex; min-height: 0; }
.left { width: 763px; flex: none; }
.ctl { display: flex; height: 52px; }
.clock { width: 143px; padding: 6px 0 0 14px; display: flex; flex-direction: column; }
.clock strong { color: #2f96ee; font-size: 21px; line-height: 22px; padding-left: 2px; }
.clock small { color: #1a6cab; font-size: 14px; line-height: 20px; }
.lsearch { width: 380px; margin-top: 11px; padding-left: 8px; gap: 8px; }
.cbtns { display: flex; align-items: center; padding: 0 0 2px 15px; }
.cbtns button { width: 37px; }
.cbtns .apart { margin-right: 12px; }
.ltable { border-top: 1px solid #202020; }
.ltable svg { color: #b0b0b0; }
.l1 { width: 96px; } .l2 { width: 46px; } .l3 { width: 47px; } .l4 { width: 187px; } .l5 { width: 196px; } .l6 { width: 168px; }
.ltable th { height: 26px; font-size: 13px; }
.ltable th > div { height: 17px; border-left: 2px solid #111; line-height: 17px; }
.ltable th > .av { border-left: 0; }
.ltable td { height: 24px; }
.ltable tbody tr { background: #2e2e2e; border-bottom: 1px solid #282828; }
.ltable tbody tr.active { background: #444; }
.av, .sws { display: flex; align-items: center; gap: 3px; }
.av { padding-left: 5px; }
.av span, .sws span { width: 19px; height: 19px; display: flex; align-items: center; justify-content: center; }
.sws { padding-left: 7px; width: 176px; }
.sws span { flex: 1 1 0; width: 0; }
.ltable th > .sws { padding-left: 5px; }
.bx { background: #232323; }
.active .bx { background: #373737; }
.fx { font-style: italic; font-size: 18px; color: #b0b0b0; }
.lab { padding-left: 18px; display: flex; align-items: center; }
.lab2 { display: flex; align-items: center; gap: 8px; padding-left: 9px; }
.lab2 i { width: 18px; height: 18px; }
.num { padding-left: 7px; } .num.big { padding-left: 10px; font-weight: 700; }
.src { padding-left: 7px; } .par { padding-left: 7px; }
.lname { display: flex; align-items: center; height: 23px; }
.lpic { width: 27px; padding-left: 4px; display: flex; justify-content: center; flex: none; }
.lpic i { width: 21px; height: 20px; background: #000; }
.lt { flex: 1; padding-left: 5px; line-height: 23px; font-weight: 700; white-space: nowrap; }
.active .lt { background: #9b9b9b; color: #333; }
.pl { display: flex; align-items: center; gap: 9px; padding-left: 8px; }
.psel { width: 128px; height: 20px; border-radius: 0; border: 0; font-weight: 500; }
.psel svg { top: 6px; right: 7px; }

.graph { flex: 1; position: relative; display: flex; flex-direction: column; min-width: 0; border-left: 2px solid #0c0c0c; overflow: hidden; }
.nav, .work { display: flex; background: #101010; }
.nav { height: 16px; margin-top: 7px; border: solid #0c0c0c; border-width: 2px 0; }
.nav .capl, .work .capl { width: 8px; margin-right: 2px; background: #2d8ceb; border-radius: 6px 0 0 6px; }
.nav .capr, .work .capr { width: 8px; margin-left: 2px; background: #2d8ceb; border-radius: 0 6px 6px 0; }
.bar { flex: 1; background: #666; }
.ruler { display: flex; height: 26px; margin: 0 -40px 0 -36px; font-size: 14px; line-height: 19px; }
.ruler span { flex: 1 0 0; text-align: center; background: linear-gradient(#999, #999) center bottom / 2px 7px no-repeat; }
.work { height: 25px; border-top: 1px solid #0c0c0c; border-bottom: 2px solid #0c0c0c; }
.work .bar { background: #606060; }
.cache { height: 5px; padding: 0 33px 0 10px; background: #222; }
.cache i { display: block; height: 4px; background: #13c21d; }
.lane { height: 24px; padding: 0 10px 1px; background: #2e2e2e; }
.lane.hot { background: #444; margin-top: 1px; }
.clip { position: relative; height: 23px; }
.red { background: linear-gradient(#b04b4b, #a94848 50%, #8e4343); border-top: 1px solid #d08080; }
.red i { position: absolute; border: 1px solid #5a5794; }
.k1 { left: 18px; top: 2px; width: 24px; height: 20px; }
.k2 { left: 44px; top: 3px; width: 134px; height: 18px; }
.teal { background: #758985; border-top-right-radius: 8px; border-top-left-radius: 8px; }
.void { flex: 1; padding: 0 10px; background: #282828; display: flex; }
.void i { flex: 1; background: #353535; }
.play { position: absolute; left: 1px; top: 28px; bottom: 0; display: flex; flex-direction: column; align-items: center; pointer-events: none; }
.play i { flex: 1; width: 2px; background: #2d8ceb; }
.gutter { width: 25px; flex: none; margin-left: 1px; padding: 53px 0 0 1px; background: #232323; display: flex; flex-direction: column; align-items: center; gap: 10px; color: #b0b0b0; }
.tfoot { flex: none; height: 28px; background: #1f1f1f; border-top: 2px solid #101010; }
.fmain { width: 917px; height: 26px; background: #282828; display: flex; align-items: center; padding: 0 0 1px 9px; gap: 11px; }
.frt { margin-left: 29px; white-space: nowrap; }
.frt b { color: #a5d6a8; font-weight: 700; margin-left: 4px; }
.toggle { width: 192px; height: 22px; margin-left: 34px; background: #1f1f1f; border: 1px solid #2e2e2e; border-radius: 3px; color: #a8a8a8; white-space: nowrap; }
.mts { margin-left: 191px; }
.fmain > svg { color: #b0b0b0; }
.zoomer { appearance: none; width: 70px; height: 14px; margin-left: 6px; background: linear-gradient(#444, #444) center / 100% 2px no-repeat; }
.zoomer::-webkit-slider-thumb { appearance: none; width: 14px; height: 14px; border-radius: 7px; border: 2px solid #b0b0b0; background: #282828; }

.pointer { position: absolute; left: 0; top: 0; width: 100vw; height: 100vh; pointer-events: none; }
</style>
